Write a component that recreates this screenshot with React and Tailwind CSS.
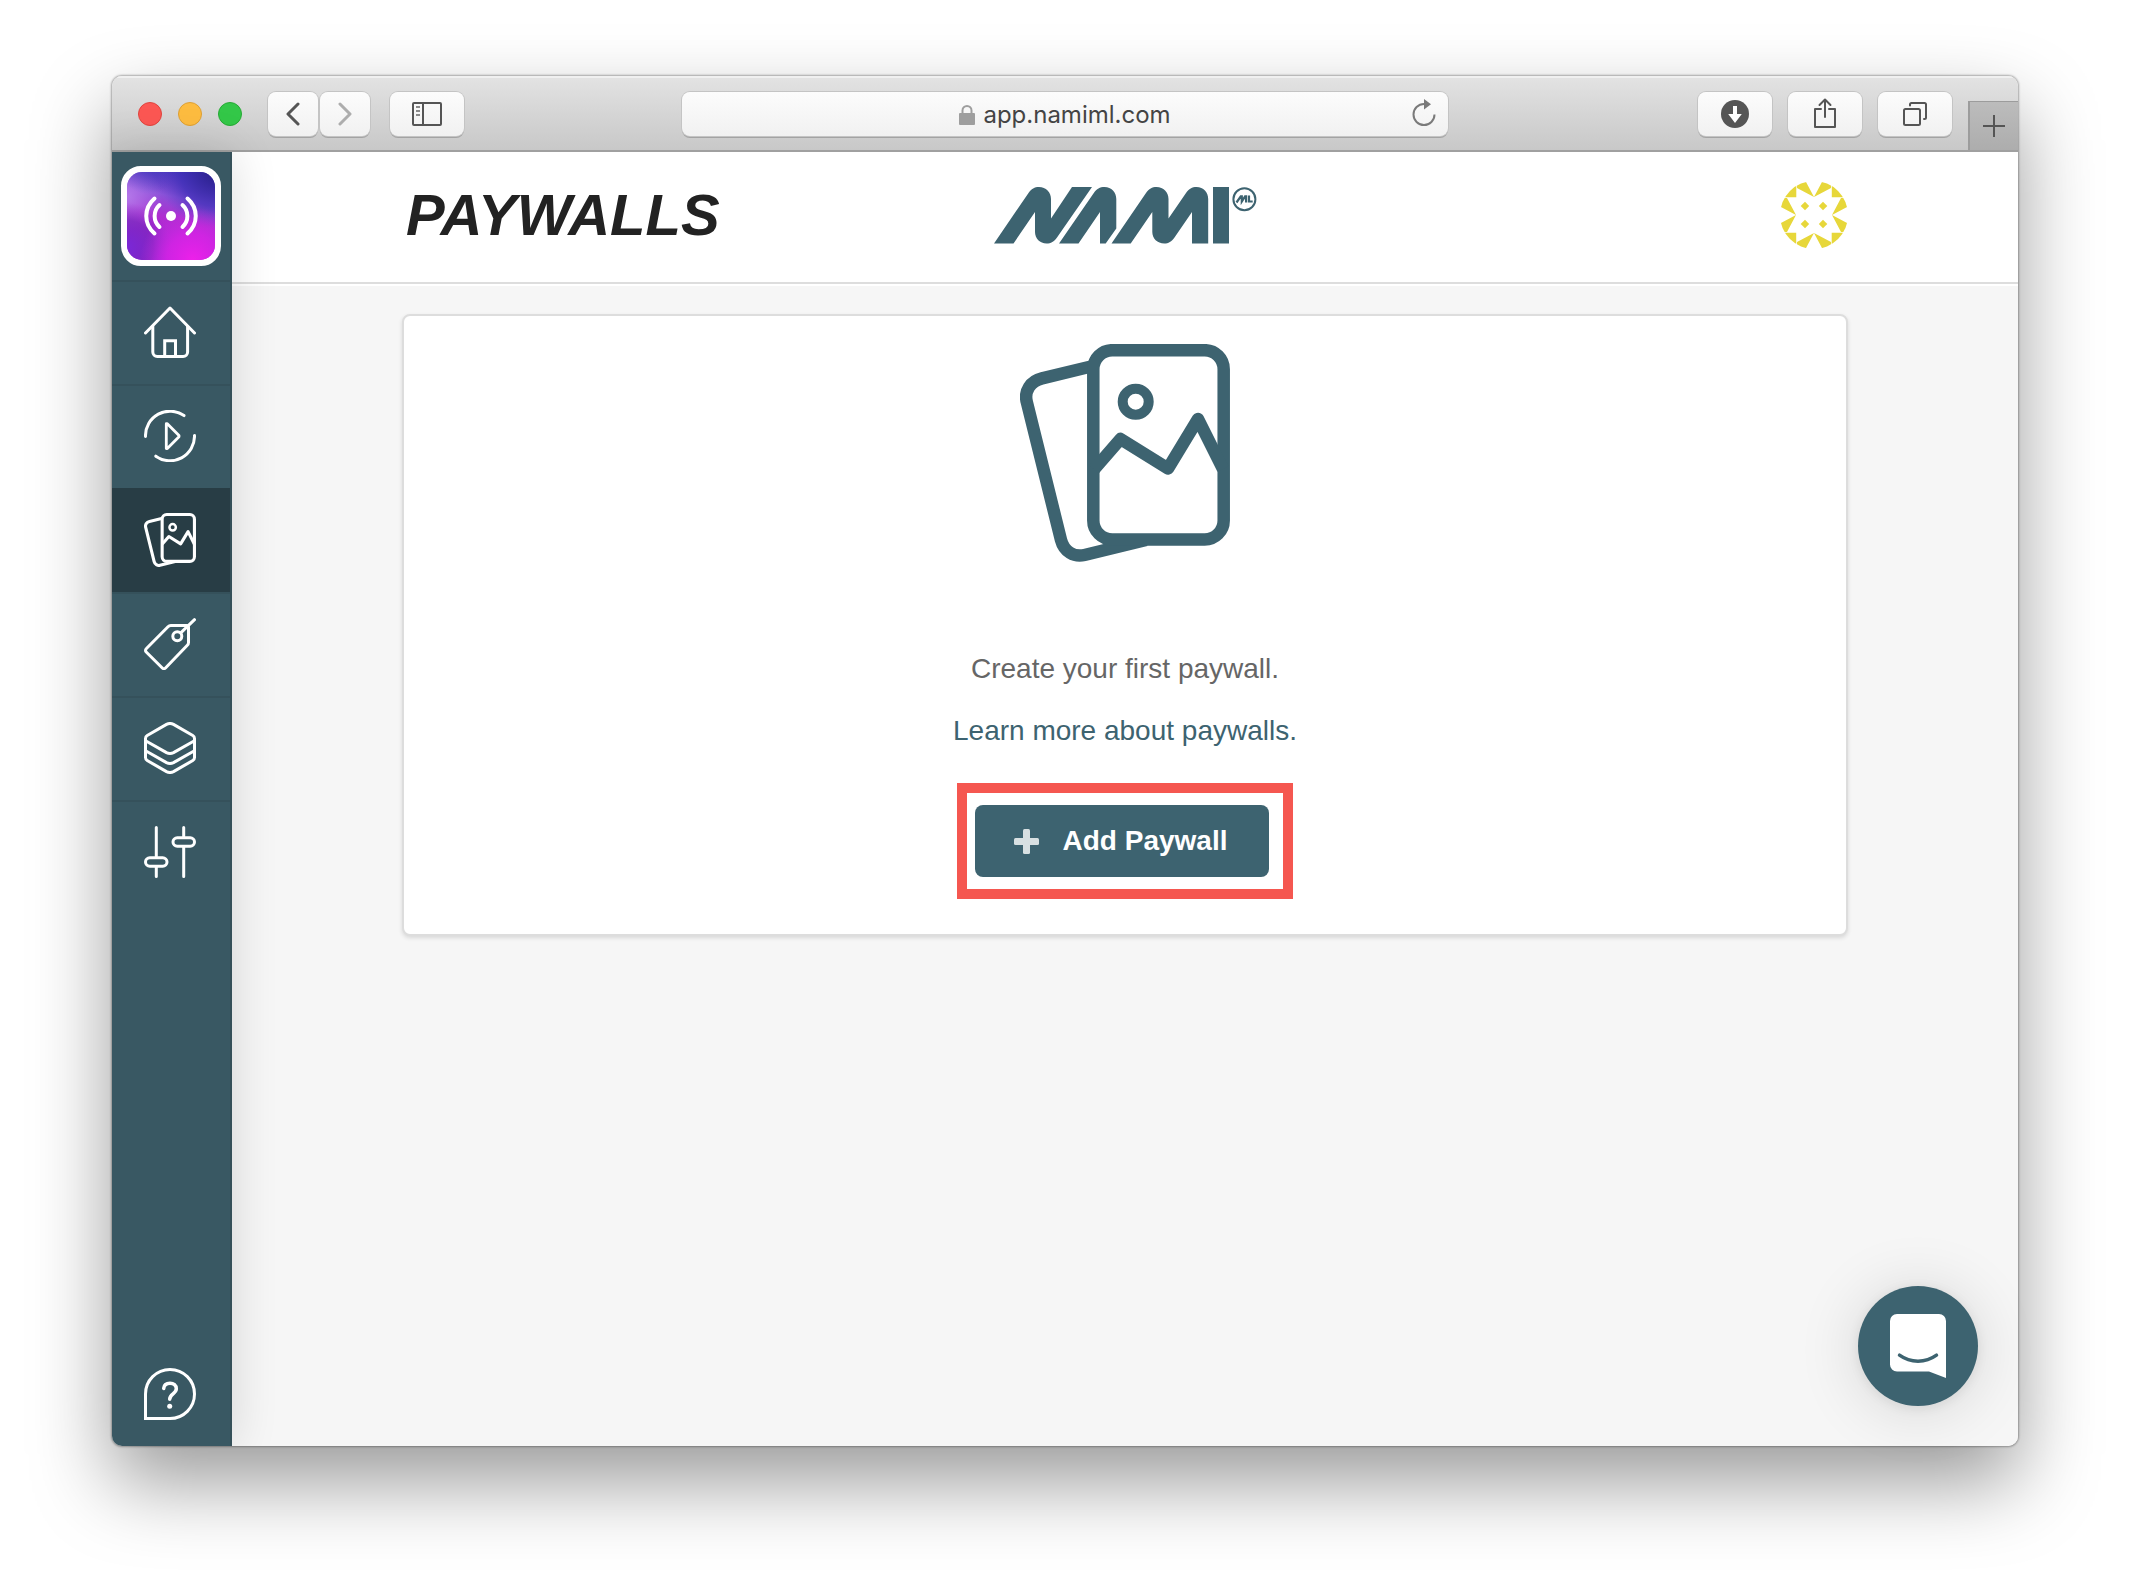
import React from "react";

const iconProps = {
  fill: "none",
  stroke: "currentColor",
  strokeWidth: 3,
  strokeLinecap: "round",
  strokeLinejoin: "round",
  "aria-hidden": true,
};

function HomeIcon() {
  return (
    <svg viewBox="0 0 52 52" className="size-[52px]" {...iconProps}>
      <path d="M1.5 27 26 2l24.500 25" />
      <path d="M8.800 20.500V46a4.500 4.500 0 0 0 4.500 4.500h25.800a4.500 4.500 0 0 0 4.500-4.500V20.500" />
      <path d="M20.700 50V34.700h10.800V50" strokeLinejoin="miter" />
    </svg>
  );
}

function CampaignIcon() {
  return (
    <svg viewBox="0 0 52 52" className="size-[52px]" {...iconProps}>
      <path d="M1.5 26.500A24.500 24.500 0 0 1 40 5.600" />
      <path d="M50.500 25.500A24.500 24.500 0 0 1 11.800 46.200" />
      <path d="M22.300 13.700v24.800h1L35 26.700v-1.200L23.300 13.700z" strokeWidth="2.800" />
    </svg>
  );
}

function PaywallIcon({ className }) {
  return (
    <svg viewBox="0 0 210 218" className={className} {...iconProps} strokeWidth="12.500">
      <path d="M71 22.500 22 34.300C10.500 37 4 47 6.800 58L41 196c3 11.500 13 17.500 23.500 15L126 196" strokeLinecap="butt" />
      <rect x="73.300" y="6.200" width="130.400" height="189.300" rx="19" />
      <circle cx="115.700" cy="57.700" r="13" strokeWidth="10" />
      <path d="M74 125.500 100.500 95 148 124.500 178 75l25 50" strokeLinecap="butt" />
    </svg>
  );
}

function TagIcon() {
  return (
    <svg viewBox="0 0 52 52" className="size-[52px]" {...iconProps}>
      <path d="M27 7.500h15.500a2 2 0 0 1 2 2v15a4 4 0 0 1-1.200 2.800L21.500 50a2.200 2.200 0 0 1-3.200 0L2.200 34a2.200 2.200 0 0 1 0-3.200L24 8.700a4 4 0 0 1 3-1.200z" />
      <circle cx="33.300" cy="18.300" r="4.500" />
      <path d="M37 14.700 50.500 1.700" />
    </svg>
  );
}

function LayersIcon() {
  return (
    <svg viewBox="0 0 52 52" className="size-[52px]" {...iconProps}>
      <path d="M22.500 2.400q3.500-1.800 7 0L48.800 13.500q1.700 1 1.700 3V35.500q0 2-1.700 3L29.500 49.600q-3.500 1.800-7 0L3.200 38.500q-1.700-1-1.700-3V16.500q0-2 1.700-3z" />
      <path d="M2 19 22.500 30.600q3.500 1.800 7 0L50 19" />
      <path d="M2 29 22.500 40.600q3.500 1.800 7 0L50 29" />
    </svg>
  );
}

function SlidersIcon() {
  return (
    <svg viewBox="0 0 52 52" className="size-[52px]" {...iconProps}>
      <path d="M12.300 1.500v29M12.300 41v9.500M39.700 1.500v9M39.700 21v29.500" />
      <rect x="1.500" y="31.700" width="21.500" height="8.600" rx="4.300" />
      <rect x="29" y="11.700" width="21.500" height="8.600" rx="4.300" />
    </svg>
  );
}

function HelpIcon() {
  return (
    <svg viewBox="0 0 52 52" className="size-[52px]" {...iconProps}>
      <path d="M1.500 50.500V26A24.500 24.500 0 1 1 26 50.500z" strokeLinejoin="miter" />
      <path d="M19.700 20.500c.300-3.700 3-5.300 6.300-5.300 3.600 0 6.300 2 6.300 5.600 0 5-6.600 5.200-6.600 10.400" strokeWidth="3.500" />
      <circle cx="25.700" cy="38.300" r="2.500" fill="currentColor" stroke="none" />
    </svg>
  );
}

function NamiLogo() {
  return (
    <svg viewBox="0 0 263 57" className="h-[57px] w-[263px]" fill="#3d6370" role="img" aria-label="Nami ML">
      <path d="M0 56.500 34.500 6C37.500 1.700 40.500 0 45 0c7 0 12 5 12 12v19.500L78 0h20L63 50.500c-3 4.200-6 6-10.500 6C46 56.500 41 51.500 41 45V25L19.500 56.500z" />
      <path d="M65 56.500 99.800 6c3-4.300 6-6 10.700-6C117.500 0 122.300 5 122.300 12v29.500l-10.600 15H106V25L84.500 56.500z" />
      <path d="M117.500 56.500 152 6c3-4.300 6-6 10.500-6 7 0 12 5 12 12v19.500L192 6c3-4.300 6-6 10.500-6 7 0 11.700 5 11.700 12v44.500H198V25l-17.500 25.500c-3 4.200-6 6-10.200 6-7 0-12-5-12-11.500V25l-21.600 31.500z" />
      <path d="M219 0h16v56.500h-16z" />
      <circle cx="250.400" cy="12.200" r="11" fill="none" stroke="#3d6370" strokeWidth="2" />
      <path d="M242.500 15.500 246.800 9.300h1v5.200l3.300-5.200h1v6.200M255 8.500v6h3.700" fill="none" stroke="#3d6370" strokeWidth="2.200" />
    </svg>
  );
}

function Identicon() {
  return (
    <svg viewBox="0 0 68 68" className="size-[68px]" fill="#e7d73a" aria-hidden="true">
      <clipPath id="avatar-circle">
        <circle cx="34" cy="34" r="34" />
      </clipPath>
      <g clipPath="url(#avatar-circle)">
        {[0, 90, 180, 270].map((deg) => (
          <g key={deg} transform={`rotate(${deg} 34 34)`}>
            <path d="M0 0h16.300v16.200H0z" />
            <path d="M34 16 17 7V0h8.500zM34 16 51 7V0h-8.500z" />
            <path d="M25 20.700 29.200 25 25 29.200 20.700 25z" />
          </g>
        ))}
      </g>
    </svg>
  );
}

function AppBadge() {
  return (
    <svg viewBox="0 0 88 88" className="size-[88px] rounded-[15px]" aria-hidden="true">
      <defs>
        <linearGradient id="badge-base" x1="0.700" y1="0" x2="0.500" y2="1">
          <stop offset="0" stopColor="#3a2cb4" />
          <stop offset="0.300" stopColor="#8a52d8" />
          <stop offset="0.550" stopColor="#b02cd0" />
          <stop offset="1" stopColor="#a41fd6" />
        </linearGradient>
        <radialGradient id="badge-pink" cx="0.750" cy="1" r="0.600">
          <stop offset="0" stopColor="#ee20ea" />
          <stop offset="0.500" stopColor="#d824e6" stopOpacity="0.800" />
          <stop offset="1" stopColor="#c030e0" stopOpacity="0" />
        </radialGradient>
        <radialGradient id="badge-navy" cx="1" cy="0" r="0.650">
          <stop offset="0" stopColor="#2a2088" />
          <stop offset="0.600" stopColor="#4030b8" stopOpacity="0.750" />
          <stop offset="1" stopColor="#5a3cc8" stopOpacity="0" />
        </radialGradient>
        <radialGradient id="badge-violet" cx="0" cy="0.850" r="0.500">
          <stop offset="0" stopColor="#7a28d8" />
          <stop offset="0.600" stopColor="#7426bc" stopOpacity="0.700" />
          <stop offset="1" stopColor="#8a2cc8" stopOpacity="0" />
        </radialGradient>
        <radialGradient id="badge-lilac" cx="0" cy="0.280" r="0.400">
          <stop offset="0" stopColor="#b478ea" />
          <stop offset="1" stopColor="#b478ea" stopOpacity="0" />
        </radialGradient>
        <radialGradient id="badge-indigo" cx="0.250" cy="-0.150" r="0.400">
          <stop offset="0" stopColor="#4a3cc0" />
          <stop offset="1" stopColor="#5a44c8" stopOpacity="0" />
        </radialGradient>
      </defs>
      <path d="M0 0h88v88H0z" fill="url(#badge-base)" />
      <path d="M0 0h88v88H0z" fill="url(#badge-lilac)" />
      <path d="M0 0h88v88H0z" fill="url(#badge-indigo)" />
      <path d="M0 0h88v88H0z" fill="url(#badge-navy)" />
      <path d="M0 0h88v88H0z" fill="url(#badge-violet)" />
      <path d="M0 0h88v88H0z" fill="url(#badge-pink)" />
      <circle cx="44" cy="44" r="5" fill="#fff" />
      <g fill="none" stroke="#fff" strokeWidth="4" strokeLinecap="round">
        <path d="M32.500 33c-6.500 6-6.500 16 0 22M27.500 26.500c-11 9.500-11 25.500 0 35" />
        <path d="M55.500 33c6.500 6 6.500 16 0 22M60.500 26.500c11 9.500 11 25.500 0 35" />
      </g>
    </svg>
  );
}

const navItems = [
  { label: "Home", icon: <HomeIcon /> },
  { label: "Campaigns", icon: <CampaignIcon /> },
  { label: "Paywalls", icon: <PaywallIcon className="h-[54px] w-[52px]" />, active: true },
  { label: "Products", icon: <TagIcon /> },
  { label: "Entitlements", icon: <LayersIcon /> },
  { label: "Settings", icon: <SlidersIcon /> },
];

function ToolbarButton({ label, className, children }) {
  return (
    <button
      type="button"
      aria-label={label}
      className={`flex h-11 items-center justify-center rounded-lg bg-linear-to-b from-[#fcfcfc] to-[#f1f1f1] text-[#555] shadow-[0_0_0_1px_#c4c4c4,0_2px_0_#a3a3a3] ${className}`}
    >
      {children}
    </button>
  );
}

function Toolbar() {
  return (
    <div className="flex h-[76px] items-center border-b-2 border-[#a0a0a0] bg-linear-to-b from-[#e3e3e3] to-[#c8c8c8] pt-0.5 shadow-[inset_0_2px_0_#f0f0f0]">
      <div className="flex flex-1 items-center">
        <div className="ml-[26px] flex gap-4">
          <span className="size-6 rounded-full border border-[#e0443e] bg-[#fc5753]" />
          <span className="size-6 rounded-full border border-[#dea034] bg-[#fdbc40]" />
          <span className="size-6 rounded-full border border-[#27aa35] bg-[#33c748]" />
        </div>
        <div className="ml-[26px] flex gap-0.5">
          <ToolbarButton label="Back" className="w-[50px]">
            <svg viewBox="0 0 14 24" className="h-6 w-3.5" {...iconProps}>
              <path d="M12 2 2 12l10 10" />
            </svg>
          </ToolbarButton>
          <ToolbarButton label="Forward" className="w-[50px]">
            <svg viewBox="0 0 14 24" className="h-6 w-3.5 text-[#adadad]" {...iconProps}>
              <path d="m2 2 10 10L2 22" />
            </svg>
          </ToolbarButton>
        </div>
        <ToolbarButton label="Show sidebar" className="ml-5 w-[74px]">
          <svg viewBox="0 0 30 24" className="h-6 w-[30px]" {...iconProps} strokeWidth="2">
            <rect x="1" y="1" width="28" height="22" rx="1" />
            <path d="M11 1v22" />
            <path d="M4 5h4M4 9h4M4 13h4" stroke="#8a8a8a" strokeLinecap="butt" />
          </svg>
        </ToolbarButton>
      </div>

      <div className="flex h-11 w-[766px] items-center rounded-lg bg-linear-to-b from-[#fcfcfc] to-[#f1f1f1] px-3 pt-0.5 shadow-[0_0_0_1px_#c4c4c4,0_2px_0_#a3a3a3]">
        <span className="w-6" />
        <div className="flex flex-1 items-center justify-center gap-2">
          <svg viewBox="0 0 16 20" className="h-5 w-4" aria-hidden="true">
            <path d="M3.500 9V5.500a4.500 4.500 0 0 1 9 0V9" fill="none" stroke="#9e9e9e" strokeWidth="2" />
            <rect y="8" width="16" height="12" rx="1" fill="#9e9e9e" />
          </svg>
          <span className="font-['Inter',sans-serif] text-2xl leading-8 text-[#444]">app.namiml.com</span>
        </div>
        <button type="button" aria-label="Reload" className="pb-1">
          <svg viewBox="0 0 24 28" className="h-7 w-6 text-[#7a7a7a]" {...iconProps} strokeWidth="2">
            <path d="M12 5A10.500 10.500 0 1 0 22.500 15.500" strokeLinecap="butt" />
            <path d="M12 0v10.500l7-5.200z" fill="currentColor" stroke="none" />
          </svg>
        </button>
      </div>

      <div className="flex flex-1 items-center justify-end gap-4 self-stretch">
        <ToolbarButton label="Downloads" className="w-[74px]">
          <svg viewBox="0 0 28 28" className="size-7" aria-hidden="true">
            <circle cx="14" cy="14" r="14" fill="#555" />
            <path d="M12 6h4v8h4.800L14 23 7.200 14H12z" fill="#fff" />
          </svg>
        </ToolbarButton>
        <ToolbarButton label="Share" className="w-[74px]">
          <svg viewBox="0 0 22 30" className="mb-0.5 h-[30px] w-[22px]" {...iconProps} strokeWidth="2">
            <path d="M7 11H1v18h20V11h-6M11 19V1.500M5.500 7 11 1.500 16.500 7" />
          </svg>
        </ToolbarButton>
        <ToolbarButton label="Show tabs" className="w-[74px]">
          <svg viewBox="0 0 24 24" className="size-6" {...iconProps} strokeWidth="2">
            <rect x="1" y="7" width="16" height="16" rx="1.500" />
            <path d="M7 3.500V2.500A1.500 1.500 0 0 1 8.500 1H21.500A1.500 1.500 0 0 1 23 2.500V15.500A1.500 1.500 0 0 1 21.500 17H21" />
          </svg>
        </ToolbarButton>
        <button
          type="button"
          aria-label="New tab"
          className="flex h-[49px] w-[50px] items-center justify-center self-end border-t border-l-2 border-[#9c9c9c] bg-linear-to-b from-[#bcbcbc] to-[#adadad] text-[#555]"
        >
          <svg viewBox="0 0 22 22" className="size-[22px]" {...iconProps} strokeWidth="2" strokeLinecap="butt">
            <path d="M11 0v22M0 11h22" />
          </svg>
        </button>
      </div>
    </div>
  );
}

function Sidebar() {
  return (
    <nav className="z-10 flex w-[120px] shrink-0 flex-col border-r-2 border-[#355059] bg-[#395863] text-white shadow-[0_0_48px_rgba(0,0,0,0.14)]">
      <div className="flex h-32 justify-center pt-3.5">
        <a href="#app" aria-label="Current app" className="size-[100px] rounded-[20px] border-6 border-white bg-white">
          <AppBadge />
        </a>
      </div>
      {navItems.map((item) => (
        <a
          key={item.label}
          href={`#${item.label.toLowerCase()}`}
          aria-label={item.label}
          className={`flex h-[104px] items-center justify-center border-t-2 pr-0.5 pb-0.5 ${
            item.active ? "border-[#283d45] bg-[#283d45]" : "border-[#35515b]"
          }`}
        >
          {item.icon}
        </a>
      ))}
      <a href="#help" aria-label="Help" className="mt-auto flex h-[104px] items-center justify-center pr-0.5">
        <HelpIcon />
      </a>
    </nav>
  );
}

export default function App() {
  return (
    <div className="flex min-h-screen flex-col bg-white px-28 pt-[76px] pb-[148px] font-['Liberation_Sans',Arial,sans-serif]">
      <div className="relative flex flex-1 rounded-[10px] shadow-[0_0_2px_1px_rgba(0,0,0,0.3),0_36px_80px_rgba(0,0,0,0.4)]">
        <div className="flex min-w-0 flex-1 flex-col overflow-hidden rounded-[10px]">
          <Toolbar />
          <div className="flex flex-1">
            <Sidebar />
            <main className="flex-1 bg-[#f6f6f6]">
              <header className="border-b-2 border-[#ddd] bg-white px-12 shadow-[0_2px_0_#fff]">
                <div className="mx-auto grid h-[130px] max-w-[1446px] grid-cols-3 items-center pb-1">
                  <h1 className="pl-1 text-[58px] leading-none font-bold text-[#222] italic">PAYWALLS</h1>
                  <a href="#home" className="justify-self-center">
                    <NamiLogo />
                  </a>
                  <button type="button" aria-label="Account" className="justify-self-end">
                    <Identicon />
                  </button>
                </div>
              </header>

              <div className="px-12 pt-[30px]">
                <section className="mx-auto flex max-w-[1446px] flex-col items-center rounded-lg border-2 border-[#ddd] bg-white pt-7 pb-[35px] text-[28px] leading-10 shadow-[0_2px_4px_rgba(0,0,0,0.12)]">
                  <PaywallIcon className="h-[218px] w-[210px] text-[#3d6370]" />
                  <p className="mt-[87px] text-[#666]">Create your first paywall.</p>
                  <a href="#learn" className="mt-[22px] text-[#3d6370]">
                    Learn more about paywalls.
                  </a>
                  <div className="mt-8 border-10 border-[#f55750] py-3 pr-3.5 pl-2">
                    <button
                      type="button"
                      className="flex h-[72px] items-center gap-6 rounded-lg bg-[#3d6370] pr-[42px] pl-[39px] font-bold text-white"
                    >
                      <svg viewBox="0 0 25 25" className="size-[25px]" fill="#d8e0e2" aria-hidden="true">
                        <rect x="9" width="7" height="25" rx="1.500" />
                        <rect y="9" width="25" height="7" rx="1.500" />
                      </svg>
                      Add Paywall
                    </button>
                  </div>
                </section>
              </div>
            </main>
          </div>
        </div>

        {/* chat launcher floats over the page */}
        <button
          type="button"
          aria-label="Open chat"
          className="absolute right-10 bottom-10 z-20 flex size-[120px] items-center justify-center rounded-full bg-[#3d6370] shadow-[0_4px_64px_rgba(0,0,0,0.14),0_2px_12px_rgba(0,0,0,0.08)]"
        >
          <svg viewBox="0 0 56 64" className="h-16 w-14" aria-hidden="true">
            <path d="M7 0h42a7 7 0 0 1 7 7v57l-17-6.500H7a7 7 0 0 1-7-7V7a7 7 0 0 1 7-7z" fill="#fff" />
            <path d="M9.500 41.200c11 8 26 8 37 0" fill="none" stroke="#3d6370" strokeWidth="3.500" strokeLinecap="round" />
          </svg>
        </button>
      </div>
    </div>
  );
}
